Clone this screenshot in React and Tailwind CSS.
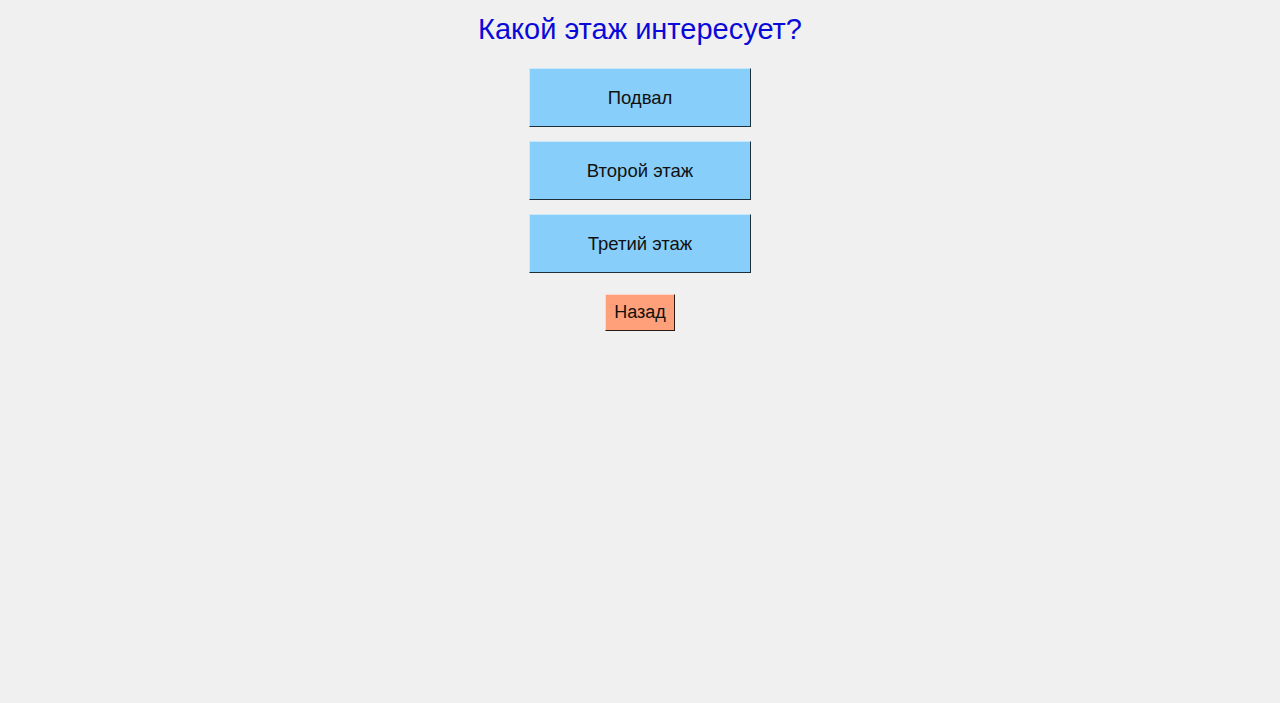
export default function App() {
  const font = { fontFamily: '"Liberation Sans", Arial, sans-serif' };
  return (
    <div className="min-h-[703px] w-full bg-[#f0f0f0] flex flex-col items-center" style={font}>
      <h1 className="mt-[11px] text-[29px] leading-[36px] text-[#0a0ad8]">Какой этаж интересует?</h1>
      <div className="mt-[21px] flex flex-col gap-[14px]">
        {["Подвал", "Второй этаж", "Третий этаж"].map((t) => (
          <div
            key={t}
            className="w-[222px] h-[59px] bg-[#87cefa] border-t border-l border-t-[#c8e8fc] border-l-[#c8e8fc] border-r border-b border-r-[#1f2f3a] border-b-[#1f2f3a] flex items-center justify-center text-[18.5px] text-[#111]"
          >
            {t}
          </div>
        ))}
      </div>
      <div className="mt-[21px] h-[37px] px-[8px] bg-[#ffa07a] border-t border-l border-t-[#ffd8c8] border-l-[#ffd8c8] border-r border-b border-r-[#2a1a14] border-b-[#2a1a14] flex items-center justify-center text-[18px] text-[#111]">
        Назад
      </div>
    </div>
  );
}
